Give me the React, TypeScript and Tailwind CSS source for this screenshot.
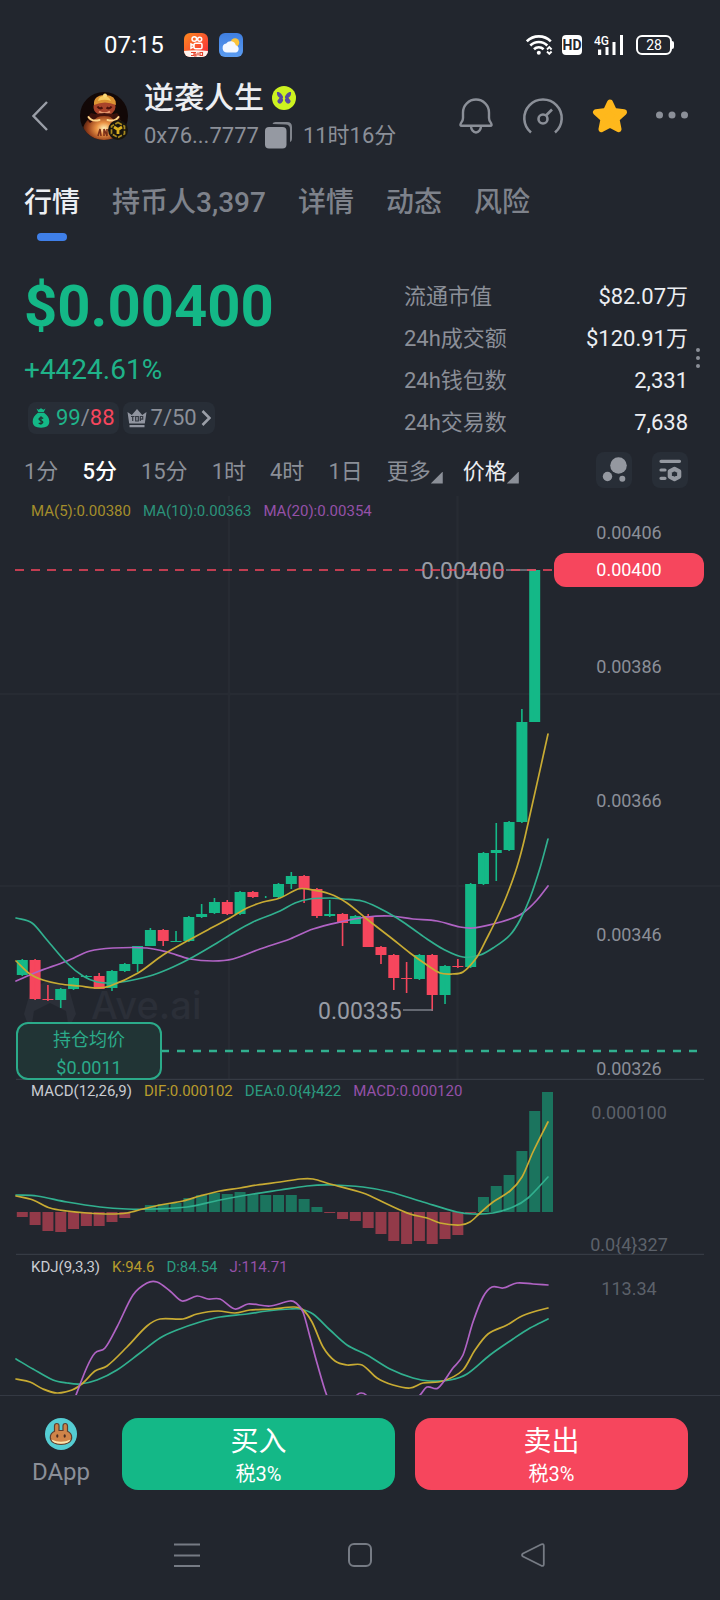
import { useState } from 'react';

const UP = '#14b887';
const DOWN = '#f6465d';
const YELLOW = '#c8ab33';
const TEAL = '#31b08f';
const PURPLE = '#b063c4';

const tabs = ['行情', '持币人3,397', '详情', '动态', '风险'];
const periods = ['1分', '5分', '15分', '1时', '4时', '1日'];

const stats = [
  { label: '流通市值', value: '$82.07万' },
  { label: '24h成交额', value: '$120.91万' },
  { label: '24h钱包数', value: '2,331' },
  { label: '24h交易数', value: '7,638' },
];

// [rising, body top, body bottom, wick top, wick bottom]
const candles = [
  [1, 464, 479, 463, 480], [0, 464, 503, 463, 504], [0, 503, 504, 489, 505], [1, 493, 504, 492, 512],
  [1, 482, 493, 481, 494], [1, 480, 481, 479, 482], [0, 480, 493, 477, 493], [1, 475, 492, 474, 495],
  [1, 468, 475, 467, 476], [1, 450, 468, 450, 476], [1, 434, 450, 432, 450], [0, 434, 445, 433, 450],
  [1, 445, 446, 435, 446], [1, 421, 445, 420, 446], [1, 418, 421, 408, 422], [1, 406, 417, 402, 418],
  [0, 406, 418, 404, 419], [1, 396, 418, 395, 419], [0, 396, 401, 395, 402], [1, 401, 401, 400, 402],
  [1, 388, 401, 387, 402], [1, 380, 388, 376, 393], [0, 380, 393, 379, 407], [0, 393, 420, 392, 422],
  [1, 418, 420, 404, 421], [0, 418, 427, 417, 450], [1, 420, 428, 419, 428], [0, 420, 451, 418, 451],
  [0, 451, 459, 450, 468], [0, 459, 482, 458, 494], [0, 482, 483, 466, 497], [1, 459, 483, 458, 484],
  [0, 459, 499, 458, 515], [1, 470, 499, 469, 508], [0, 470, 471, 463, 472], [1, 388, 471, 387, 472],
  [1, 357, 388, 356, 389], [1, 354, 357, 327, 385], [1, 326, 354, 325, 355], [1, 226, 326, 213, 327],
  [1, 74, 226, 74, 226],
];

const macdBars = [
  -5, -13, -19, -20, -17, -14, -14, -10, -6, 0, 7, 8, 9, 14, 17, 19, 18, 20, 18, 17, 17, 17, 13, 5, -1, -7, -9, -16,
  -22, -29, -32, -29, -32, -27, -23, -1, 15, 26, 37, 61, 101, 120,
];

const ma5 = [16, 465, 30, 478, 43, 484, 60, 488, 80, 490, 95, 492, 110, 490, 138, 477, 163, 459, 189, 444, 213, 431, 230, 422, 247, 412, 263, 406, 280, 402, 298, 393, 307, 393, 330, 398, 347, 407, 368, 424, 390, 441, 410, 457, 427, 469, 440, 477, 452, 478, 463, 476, 477, 461, 487, 442, 497, 422, 507, 399, 517, 371, 525, 341, 548, 238];
const ma10 = [16, 422, 32, 427, 47, 444, 67, 467, 83, 480, 97, 486, 113, 487, 133, 484, 153, 479, 173, 471, 193, 461, 217, 447, 233, 437, 253, 426, 280, 415, 295, 407, 310, 403, 330, 402, 343, 403, 362, 405, 377, 411, 397, 422, 413, 433, 427, 443, 443, 453, 463, 461, 480, 459, 493, 452, 510, 439, 520, 424, 530, 402, 540, 372, 548, 343];
const ma20 = [16, 485, 37, 476, 67, 465, 90, 455, 113, 452, 147, 452, 167, 456, 190, 463, 213, 465, 233, 463, 260, 453, 290, 443, 313, 433, 340, 426, 367, 421, 390, 420, 413, 423, 437, 425, 460, 431, 473, 432, 493, 428, 510, 423, 523, 417, 537, 404, 548, 390];
const dif = [16, 116, 33, 120, 50, 128, 67, 131, 87, 133, 110, 134, 127, 133, 143, 129, 160, 125, 183, 121, 200, 116, 220, 111, 240, 108, 257, 105, 280, 102, 300, 99, 313, 99, 330, 104, 363, 113, 387, 124, 410, 134, 427, 138, 440, 143, 460, 145, 470, 142, 480, 133, 493, 122, 510, 111, 522, 97, 533, 72, 548, 42];
const dea = [16, 115, 37, 116, 67, 122, 100, 127, 127, 129, 153, 129, 187, 127, 220, 120, 253, 114, 280, 110, 307, 106, 330, 105, 363, 107, 390, 112, 423, 122, 457, 132, 473, 134, 493, 133, 513, 127, 528, 118, 548, 97];
const kLine = [16, 124, 30, 127, 43, 134, 57, 138, 72, 135, 83, 128, 95, 116, 107, 111, 127, 92, 147, 71, 160, 64, 183, 64, 197, 59, 218, 56, 235, 58, 250, 55, 273, 54, 293, 52, 302, 54, 312, 67, 323, 92, 335, 106, 347, 110, 362, 110, 377, 123, 393, 130, 410, 133, 423, 128, 443, 126, 463, 115, 475, 95, 488, 79, 507, 70, 520, 62, 533, 57, 548, 53];
const dLine = [16, 104, 33, 114, 53, 125, 67, 128, 80, 129, 97, 125, 117, 115, 140, 98, 160, 83, 177, 75, 200, 67, 220, 62, 247, 59, 267, 56, 290, 54, 300, 54, 313, 59, 330, 75, 347, 90, 367, 100, 390, 114, 413, 123, 430, 126, 450, 125, 467, 119, 490, 100, 513, 84, 530, 73, 548, 64];
const jLine = [76, 140, 87, 112, 95, 98, 105, 93, 117, 72, 133, 40, 147, 28, 157, 27, 170, 36, 182, 46, 197, 41, 208, 44, 220, 44, 235, 54, 248, 49, 270, 51, 290, 46, 296, 48, 303, 57, 310, 82, 317, 108, 327, 141, 337, 160, 350, 150, 357, 140, 361, 138, 366, 140, 375, 155, 400, 160, 420, 140, 427, 132, 438, 133, 453, 113, 463, 100, 473, 67, 483, 42, 492, 32, 503, 33, 517, 28, 533, 29, 548, 30];

const candleX = (i: number) => 22.3 + i * 12.81;

// smooth curve through a flat [x, y, x, y, ...] list, x always rising
function spline(p: number[]) {
  const n = p.length / 2;
  const slope = (i: number) => {
    const a = Math.max(0, i - 1);
    const b = Math.min(n - 1, i + 1);
    return (p[b * 2 + 1] - p[a * 2 + 1]) / (p[b * 2] - p[a * 2]);
  };
  let d = `M${p[0]} ${p[1]}`;
  for (let i = 0; i < n - 1; i++) {
    const x1 = p[i * 2];
    const y1 = p[i * 2 + 1];
    const x2 = p[i * 2 + 2];
    const y2 = p[i * 2 + 3];
    const h = (x2 - x1) / 3;
    d += `C${x1 + h} ${y1 + slope(i) * h} ${x2 - h} ${y2 - slope(i + 1) * h} ${x2} ${y2}`;
  }
  return d;
}

function Curve({ points, color }: { points: number[]; color: string }) {
  return <path d={spline(points)} fill="none" stroke={color} strokeWidth="1.7" strokeLinecap="round" />;
}

function Legend({ items, className }: { items: [string, string][]; className: string }) {
  return (
    <div className={`absolute left-[31px] flex gap-3 text-[15px] leading-5 ${className}`}>
      {items.map(([text, color]) => (
        <span key={text} className={color}>
          {text}
        </span>
      ))}
    </div>
  );
}

function StatusBar() {
  return (
    <div className="flex h-20 items-center justify-between pl-26 pr-[46px] pt-2.5">
      <div className="flex items-center">
        <span className="mr-5 text-2xl text-white">07:15</span>
        <svg className="mr-[11px] size-6" viewBox="0 0 24 24">
          <defs>
            <linearGradient id="ks" x1="0" y1="0" x2="1" y2="1">
              <stop offset="0" stopColor="#ff8a1f" />
              <stop offset="1" stopColor="#f5273c" />
            </linearGradient>
            <clipPath id="ksClip">
              <rect width="24" height="24" rx="6" />
            </clipPath>
          </defs>
          <g clipPath="url(#ksClip)">
            <rect width="24" height="24" fill="url(#ks)" />
            <path d="M0 18q12-1.500 24 0v6H0z" fill="#fff4ee" />
            <path d="M7 19.500h3v3H7m5-3h-2v1.500h2V23h-2m4-3.500v3m2-3v3h2.500v-3z" fill="none" stroke="#e5432d" strokeWidth="1.200" />
          </g>
          <g fill="none" stroke="#fff" strokeWidth="1.500">
            <circle cx="10.300" cy="6" r="2.300" />
            <circle cx="15.700" cy="6.200" r="2" />
            <rect x="10" y="10.200" width="8" height="5.600" rx="1.500" />
            <path d="M10 12.500 7 11v4.200l3-1.500" />
          </g>
        </svg>
        <svg className="size-6" viewBox="0 0 24 24">
          <defs>
            <linearGradient id="sky" x1="0" y1="0" x2="0" y2="1">
              <stop offset="0" stopColor="#3f7ee0" />
              <stop offset="1" stopColor="#5b9cf0" />
            </linearGradient>
          </defs>
          <rect width="24" height="24" rx="6" fill="url(#sky)" />
          <circle cx="16" cy="9.500" r="4.300" fill="#fbc43b" />
          <path d="M8 19.500a4.500 4.500 0 0 1-.8-8.900 5.300 5.300 0 0 1 9.600 1.600 3.800 3.800 0 0 1 .2 7.300z" fill="#f4f8ff" />
        </svg>
      </div>
      <div className="flex items-center">
        <svg className="mr-2 h-5 w-7" viewBox="0 0 28 20" fill="none" stroke="#fff" strokeWidth="2.600">
          <path d="M.8 6.300a17 17 0 0 1 24 0" />
          <path d="M4.300 10.500a12 12 0 0 1 17 0" />
          <path d="M8 14.200a7 7 0 0 1 9.600 0" />
          <circle cx="12.800" cy="17.700" r="2" fill="#fff" stroke="none" />
          <path d="m21 14.500 2.300-2.300 2.300 2.300M21 16.500l2.300 2.300 2.300-2.300" strokeWidth="1.900" />
        </svg>
        <span className="mr-3 h-5 w-5 rounded bg-white text-center text-sm font-bold leading-5 text-[#22262e]">HD</span>
        <svg className="mr-3 h-5 w-[30px]" viewBox="0 0 30 20" fill="#fff">
          <path d="M4 14.500h3.200V20H4zM11.500 12h3v8h-3zM18.500 7h3v13h-3zM26 0h3v20h-3z" />
          <text x="0" y="10" fontSize="12" fontWeight="500" fontFamily="Roboto, sans-serif">
            4G
          </text>
        </svg>
        <div className="h-5 w-9 rounded-md border-2 border-white text-center text-sm leading-4 text-white">28</div>
        <div className="h-2 w-0.5 rounded-r bg-white" />
      </div>
    </div>
  );
}

function Header() {
  return (
    <header className="flex h-18 items-center px-8">
      <button aria-label="返回" className="mr-8">
        <svg className="h-8 w-4" viewBox="0 0 16 32" fill="none" stroke="#9a9ea7" strokeWidth="2.400">
          <path d="M15 2 1.500 16 15 30" />
        </svg>
      </button>
      <svg className="mr-4 size-12 shrink-0" viewBox="0 0 48 48">
        <defs>
          <radialGradient id="glow" cx=".5" cy=".45" r=".6">
            <stop offset="0" stopColor="#ffeeb5" />
            <stop offset=".3" stopColor="#eb9445" />
            <stop offset=".65" stopColor="#96401c" />
            <stop offset="1" stopColor="#160a08" />
          </radialGradient>
          <clipPath id="avatar">
            <circle cx="24" cy="24" r="24" />
          </clipPath>
        </defs>
        <g clipPath="url(#avatar)">
          <rect width="48" height="48" fill="#120807" />
          <ellipse cx="24" cy="38" rx="21" ry="16" fill="url(#glow)" />
          <path d="M11 21q-6 5-1 10 7-5 9-8zm26 0q6 5 1 10-7-5-9-8z" fill="#3a120b" />
          <ellipse cx="24.500" cy="15" rx="11" ry="9" fill="#a8432a" />
          <path d="M14 13Q13 3.500 24.500 3T36 13q-11-5-22 0z" fill="#dd9433" />
          <path d="M18 9q1-5 6-5t7 5q-6-2.500-13 0z" fill="#f6cb60" />
          <circle cx="25" cy="3.500" r="2" fill="#f8d878" />
          <path d="M17.500 14.500q2 3 5 1m4 0q3 2 5-1" stroke="#4a120c" strokeWidth="2.200" fill="none" />
          <path d="M19 19.500q5.500 3.500 11 0" stroke="#e89a70" strokeWidth="2" fill="none" />
          <path d="M16 24q8-3 17 0" stroke="#45140c" strokeWidth="3" fill="none" />
          <path d="M8.500 25q3 5 11 3m19-3q-3 5-11 3" stroke="#ffd68a" strokeWidth="2" fill="none" strokeLinecap="round" />
          <path d="m18 44 2-7 1 7m3 0v-7l3 7v-7" stroke="#7c2f18" strokeWidth="1.600" fill="none" />
        </g>
        <circle cx="38" cy="38" r="10" fill="#17150f" />
        <path d="m38 30.500 6.500 3.700v7.600L38 45.500l-6.500-3.700v-7.600z" fill="none" stroke="#a88a1e" strokeWidth="1.700" strokeDasharray="4.500 1.500" />
        <path d="m34 35 4 2.500 4-2.500M38 37.500V42" fill="none" stroke="#dcb01f" strokeWidth="2.800" />
      </svg>
      <div className="grow">
        <h1 className="flex h-9 items-center gap-2 text-[30px] font-medium leading-9 text-[#eceef2]">
          逆袭人生
          <svg className="size-6" viewBox="0 0 24 24">
            <circle cx="12" cy="12" r="12" fill="#cdf220" />
            <path
              d="M11.600 12.500C10.500 8 7.500 5.500 5 6c-.4 2.800.6 4.500 2.600 5.800L5.200 15q.5 2.600 2.600 2.800 3-.8 3.800-5.300zM12.400 12.500C13.500 8 16.500 5.500 19 6c.4 2.800-.6 4.500-2.600 5.800l2.400 3.200q-.5 2.600-2.600 2.800-3-.8-3.800-5.300z"
              fill="#5749a0"
            />
            <path d="m12 10-1.500 2.500L12 15l1.500-2.500z" fill="#cdf220" />
          </svg>
        </h1>
        <p className="flex h-9 items-center gap-1.5 pt-0.5 text-[22px] text-[#8b8f98]">
          0x76...7777
          <button aria-label="复制地址">
            <svg className="size-7" viewBox="0 0 28 28">
              <path d="M7.500 3Q8 1 10.500 1H22q5 0 5 5v11q0 3.500-2 4V8q0-4.500-4.500-4.500z" fill="#80848c" />
              <rect x="0" y="6" width="21.500" height="21.500" rx="4" fill="#9599a2" />
            </svg>
          </button>
          <span className="ml-1">11时16分</span>
        </p>
      </div>
      <div className="flex items-center">
        <button aria-label="提醒" className="mr-7">
          <svg className="size-9" viewBox="0 0 36 36" fill="none" stroke="#8b8f98" strokeWidth="2.400" strokeLinejoin="round">
            <path d="M5 20v-5.500a13 13 0 0 1 26 0V20q0 3 2 5 1.500 2.800-.8 2.800H3.800q-2.300 0-.8-2.800 2-2 2-5z" />
            <path d="M13 28a5 6.500 0 0 0 10 0" />
          </svg>
        </button>
        <button aria-label="速度" className="mr-7">
          <svg className="h-9 w-[42px]" viewBox="0 0 42 36" fill="none" stroke="#8b8f98" strokeWidth="2.600">
            <path d="M9 34.500a18.700 18.700 0 1 1 24 0" />
            <circle cx="21" cy="21" r="4.500" />
            <path d="m24 17.500 6-6" />
          </svg>
        </button>
        <button aria-label="收藏" className="mr-7">
          <svg className="size-9" viewBox="0 0 36 36" fill="#ffb81c" stroke="#ffb81c" strokeWidth="6" strokeLinejoin="round">
            <path d="m18 4.500 4 8.500 10 1.200-7.500 6.800 2 10.200-8.500-4.700-8.500 4.700 2-10.200L4 14.200 14 13z" />
          </svg>
        </button>
        <button aria-label="更多操作">
          <svg className="h-9 w-8" viewBox="0 0 32 36" fill="#8b8f98">
            <circle cx="3.500" cy="17" r="3.500" />
            <circle cx="16" cy="17" r="3.500" />
            <circle cx="28.500" cy="17" r="3.500" />
          </svg>
        </button>
      </div>
    </header>
  );
}

function Summary() {
  return (
    <section className="relative flex justify-between pl-6 pr-8">
      <div>
        <div className="text-[58px] font-bold leading-[60px] text-[#14b887]">$0.00400</div>
        <div className="mt-4 text-[28px] leading-9 text-[#1fb389]">+4424.61%</div>
        <div className="ml-1 mt-3.5 flex gap-1 text-[22px] leading-8">
          <button className="flex items-center rounded-lg bg-[#282e37] px-1 text-[#8b8f98]">
            <svg className="mr-1.5 h-5 w-[18px]" viewBox="0 0 18 20" fill="#14b887">
              <path d="m4.500.5 2 1.200L9 .3l2.500 1.400 2-1.200-1.700 3.400H6.200zM6 4.800h6c3.500 2.500 5.300 5.500 5.300 8.700 0 4.200-2.800 6.200-8.300 6.200S.7 17.700.7 13.500c0-3.200 1.800-6.200 5.300-8.700z" />
              <path d="M11.200 10.500q-2.200-1.500-3.700-.3t1.500 2.500q2.700.9 1.400 2.400-1.700 1.200-3.700-.2M9 8.300v8.400" fill="none" stroke="#22312f" strokeWidth="1.200" />
            </svg>
            <span className="text-[#1fb389]">99</span>/<span className="text-[#f6465d]">88</span>
          </button>
          <button className="flex items-center rounded-lg bg-[#282e37] px-1 text-[#8b8f98]">
            <svg className="mr-1 h-5 w-5" viewBox="0 0 20 20" fill="#9195a0">
              <path d="m.5 4 4.300 3L10 1l5.200 6 4.300-3-1.700 11.500H2.200zM2.500 17h15v2.200h-15z" />
              <path d="M4 8.500h3.500M5.700 8.500V13m3-4.500h2.600V13H8.700zm4.600 4.500V8.500h2.400v2.700h-2.400" fill="none" stroke="#333841" strokeWidth="1.200" />
            </svg>
            7/50
            <svg className="ml-1 h-4 w-2.5" viewBox="0 0 10 16" fill="none" stroke="#9a9ea7" strokeWidth="2.600">
              <path d="m1.500 1 7 7-7 7" />
            </svg>
          </button>
        </div>
      </div>
      <dl className="w-[284px] text-[22px]">
        {stats.map((s) => (
          <div key={s.label} className="flex h-[42px] items-center justify-between pb-0.5">
            <dt className="text-[#8b8f98]">{s.label}</dt>
            <dd className="text-[#eceef2]">{s.value}</dd>
          </div>
        ))}
      </dl>
      <div className="absolute right-5 top-[72px] flex flex-col gap-1">
        <i className="size-1 rounded-full bg-[#8b8f98]" />
        <i className="size-1 rounded-full bg-[#8b8f98]" />
        <i className="size-1 rounded-full bg-[#8b8f98]" />
      </div>
    </section>
  );
}

function Corner() {
  return <i className="mb-1 size-3 self-end bg-[#8b8f98] [clip-path:polygon(100%_0,100%_100%,0_100%)]" />;
}

function PeriodBar() {
  const [period, setPeriod] = useState('5分');
  return (
    <div className="mt-2 flex h-9 items-center justify-between pl-6 pr-8 text-[22px]">
      <div className="flex gap-6 pt-0.5">
        {periods.map((p) => (
          <button key={p} onClick={() => setPeriod(p)} className={p === period ? 'font-medium text-white' : 'text-[#8b8f98]'}>
            {p}
          </button>
        ))}
        <div className="flex gap-5">
          <button className="flex text-[#8b8f98]">
            更多
            <Corner />
          </button>
          <button className="flex text-[#eceef2]">
            价格
            <Corner />
          </button>
        </div>
      </div>
      <div className="flex gap-5">
        <button aria-label="气泡图" className="rounded-lg bg-[#282e37]">
          <svg className="size-9" viewBox="0 0 36 36" fill="#9498a0">
            <circle cx="22.500" cy="13.500" r="8.300" />
            <circle cx="11.500" cy="24.500" r="4.700" />
            <circle cx="26.300" cy="26.700" r="3" />
          </svg>
        </button>
        <button aria-label="指标设置" className="rounded-lg bg-[#282e37]">
          <svg className="size-9" viewBox="0 0 36 36" fill="none" stroke="#9498a0" strokeWidth="3.200" strokeLinecap="round">
            <path d="M9 9.300h18.500M9 18h4M9 26.300h4" />
            <path d="m22.500 16.800 4.700 2.600v5.200l-4.700 2.600-4.700-2.600v-5.200z" strokeWidth="4.200" strokeLinejoin="round" />
          </svg>
        </button>
      </div>
    </div>
  );
}

function PriceChart() {
  return (
    <section className="relative mt-2">
      <svg className="block w-full" viewBox="0 0 720 584" fontFamily="Roboto, sans-serif">
        <path d="M229 0v583M457.500 0v583M0 198h720M0 390h720" stroke="#272b33" strokeWidth="2.400" />
        <g fill="#2b2f38">
          <path d="m49 484 20 9 7 25-8 16H30l-6-16 7-25z" />
          <path d="m50 507 16 8 3 19H31l3-19z" fill="#22262e" />
          <text x="91" y="523" fontSize="38" fontWeight="500" fontFamily="Inter, sans-serif">
            Ave.ai
          </text>
        </g>
        <path d="M16 583.500h688" stroke="#363b44" strokeWidth="1.500" />
        {candles.map(([up, top, bottom, high, low], i) => (
          <g key={i} fill={up ? UP : DOWN}>
            {bottom > top && <rect x={candleX(i) - 5.5} y={top} width="11" height={bottom - top} />}
            <rect x={candleX(i) - 0.8} y={high} width="1.600" height={low - high} />
          </g>
        ))}
        <Curve points={ma20} color={PURPLE} />
        <Curve points={ma10} color={TEAL} />
        <Curve points={ma5} color={YELLOW} />
        <g fill="#989ca5" fontSize="23">
          <text x="421" y="83">0.00400</text>
          <text x="318" y="523">0.00335</text>
        </g>
        <path d="M506 74h30M403 514h30" stroke="#7b7f88" strokeWidth="1.500" />
        <path d="M15 74h540" stroke={DOWN} strokeWidth="1.500" strokeDasharray="9 7" />
        <path d="M161 555h537" stroke={TEAL} strokeWidth="2.400" strokeDasharray="8 8" />
      </svg>
      <Legend
        className="top-[5px]"
        items={[
          ['MA(5):0.00380', 'text-[#a58e2b]'],
          ['MA(10):0.00363', 'text-[#2b937a]'],
          ['MA(20):0.00354', 'text-[#9551a8]'],
        ]}
      />
      <div className="absolute right-4 top-[27px] flex w-[150px] flex-col gap-[114px] text-center text-lg leading-5 text-[#8b8f98]">
        <span>0.00406</span>
        <span>0.00386</span>
        <span>0.00366</span>
        <span>0.00346</span>
        <span>0.00326</span>
      </div>
      <div className="absolute right-4 top-[57px] w-[150px] rounded-xl bg-[#f6465d] text-center text-lg leading-[34px] text-white">
        0.00400
      </div>
      <div className="absolute bottom-0 left-4 h-[58px] w-[146px] rounded-xl border-2 border-[#2bab8a] bg-[#213435] pt-0.5 text-center text-lg leading-7 text-[#2bab8a]">
        <div>持仓均价</div>
        <div>$0.0011</div>
      </div>
    </section>
  );
}

function MacdChart() {
  return (
    <section className="relative">
      <svg className="block w-full" viewBox="0 0 720 175">
        {macdBars.map((v, i) => (
          <rect
            key={i}
            x={candleX(i) - 5.5}
            y={v > 0 ? 132 - v : 132}
            width="11"
            height={Math.abs(v)}
            fill={v > 0 ? '#1b745e' : '#923a49'}
          />
        ))}
        <Curve points={dea} color={TEAL} />
        <Curve points={dif} color={YELLOW} />
        <path d="M16 174.500h688" stroke="#363b44" strokeWidth="1.500" />
      </svg>
      <Legend
        className="top-px"
        items={[
          ['MACD(12,26,9)', 'text-[#c9ccd2]'],
          ['DIF:0.000102', 'text-[#b89b2c]'],
          ['DEA:0.0{4}422', 'text-[#2b9c80]'],
          ['MACD:0.000120', 'text-[#9551a8]'],
        ]}
      />
      <div className="absolute bottom-0 right-4 top-0 flex w-[150px] flex-col justify-between pt-[23px] text-center text-lg leading-5 text-[#5c616a]">
        <span>0.000100</span>
        <span>0.0{'{4}'}327</span>
      </div>
    </section>
  );
}

function KdjChart() {
  return (
    <section className="relative border-b border-[#343943]">
      <svg className="block w-full" viewBox="0 0 720 140">
        <Curve points={dLine} color={TEAL} />
        <Curve points={kLine} color={YELLOW} />
        <Curve points={jLine} color={PURPLE} />
      </svg>
      <Legend
        className="top-0.5"
        items={[
          ['KDJ(9,3,3)', 'text-[#c9ccd2]'],
          ['K:94.6', 'text-[#b89b2c]'],
          ['D:84.54', 'text-[#2b9c80]'],
          ['J:114.71', 'text-[#9551a8]'],
        ]}
      />
      <span className="absolute right-4 top-6 w-[150px] text-center text-lg leading-5 text-[#5c616a]">113.34</span>
    </section>
  );
}

function TradeBar() {
  return (
    <div className="flex gap-6 pl-6 pr-8 pt-[22px]">
      <button className="flex w-[74px] flex-col items-center text-2xl text-[#8b8f98]">
        <svg className="mb-1.5 size-8" viewBox="0 0 32 32">
          <circle cx="16" cy="16" r="16" fill="#55cdd3" />
          <path
            d="M9.500 8q0-2.500 2.300-2.500T14 8v4.500h4V8q0-2.500 2.200-2.500T22.500 8v5.300q4.200 2 4.200 6.200c0 4.200-4.500 7-10.700 7S5.300 23.700 5.300 19.500q0-4.200 4.200-6.200z"
            fill="#cf8449"
            stroke="#5f3f30"
            strokeWidth="1.200"
          />
          <path d="M6.300 21.500q9.700 4.500 19.400 0-2 4.300-9.700 4.300t-9.700-4.300z" fill="#fbe3ad" />
          <ellipse cx="12.300" cy="18" rx="1.100" ry="1.800" fill="#4a2c22" />
          <ellipse cx="19.700" cy="18" rx="1.100" ry="1.800" fill="#4a2c22" />
        </svg>
        DApp
      </button>
      <div className="flex grow gap-5 text-white">
        <button className="h-18 flex-1 rounded-2xl bg-[#14b887] pt-1">
          <div className="text-[28px] leading-9">买入</div>
          <div className="text-xl leading-7">税3%</div>
        </button>
        <button className="h-18 flex-1 rounded-2xl bg-[#f6465d] pt-1">
          <div className="text-[28px] leading-9">卖出</div>
          <div className="text-xl leading-7">税3%</div>
        </button>
      </div>
    </div>
  );
}

function SystemNav() {
  return (
    <nav className="mt-5 grid h-[90px] grid-cols-3 place-items-center px-[100px]">
      <button aria-label="最近任务">
        <svg className="h-6 w-7" viewBox="0 0 28 24" stroke="#767b84" strokeWidth="1.800">
          <path d="M1 1.500h26M1 12.500h26M1 23h26" />
        </svg>
      </button>
      <button aria-label="主屏幕" className="block size-6 rounded-md border-2 border-[#767b84]" />
      <button aria-label="返回上一页">
        <svg className="size-6" viewBox="0 0 24 24" fill="none" stroke="#767b84" strokeWidth="1.800" strokeLinejoin="round">
          <path d="M2 10.500 20.500 1.300q2.300-.8 2.300 1.500v18.500q0 2.200-2.300 1.500L2 13.500q-2-1.500 0-3z" />
        </svg>
      </button>
    </nav>
  );
}

export default function App() {
  const [tab, setTab] = useState('行情');

  return (
    <main className="min-h-screen w-full overflow-hidden bg-[#22262e] font-['Roboto','Noto_Sans_CJK_SC',sans-serif]">
      <StatusBar />
      <Header />
      <div className="mb-[31px] flex gap-8 px-6 pt-[31px]">
        {tabs.map((t) => (
          <button
            key={t}
            onClick={() => setTab(t)}
            className={`flex h-[62px] flex-col items-center justify-between pb-1 text-[28px] font-medium leading-10 ${t === tab ? 'text-[#eceef2]' : 'text-[#7e828b]'}`}
          >
            {t}
            {t === tab && <i className="h-2 w-[30px] rounded-full bg-[#3f7fe8]" />}
          </button>
        ))}
      </div>
      <Summary />
      <PeriodBar />
      <PriceChart />
      <MacdChart />
      <KdjChart />
      <TradeBar />
      <SystemNav />
    </main>
  );
}
